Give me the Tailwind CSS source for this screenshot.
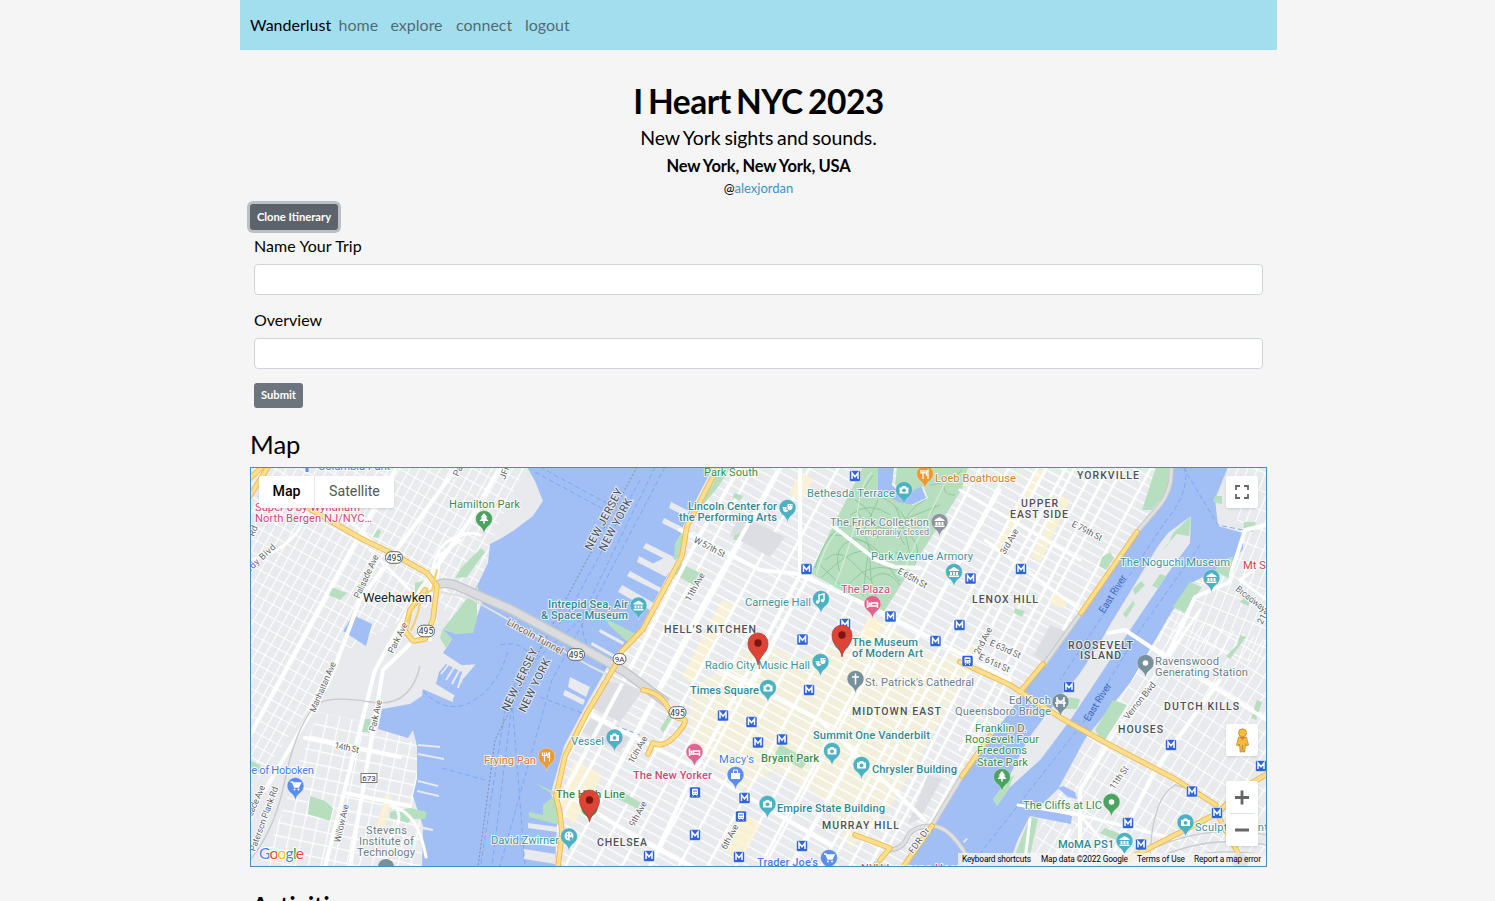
<!DOCTYPE html>
<html lang="en">
<head>
<meta charset="utf-8">
<title>Wanderlust</title>
<script src="https://cdn.jsdelivr.net/npm/@tailwindcss/browser@4"></script>
</head>
<body class="h-[901px] overflow-hidden bg-[#f5f5f5] font-['Lato',sans-serif] text-black">
<div class="ml-[240px] flex h-[901px] w-[1037px] flex-col overflow-hidden">
  <nav class="flex h-[50px] shrink-0 items-center bg-[#a3deee] px-[10px] text-[16px]">
    <a class="w-[88.5px]">Wanderlust</a>
    <a class="w-[52px] text-black/55">home</a>
    <a class="w-[65.5px] text-black/55">explore</a>
    <a class="w-[69px] text-black/55">connect</a>
    <a class="text-black/55">logout</a>
  </nav>
  <header class="flex h-[154px] shrink-0 flex-col items-center pt-[30px]">
    <h1 class="h-[41px] text-[33.5px] leading-[42px] font-bold tracking-[-0.5px] [word-spacing:-2.300px]">I Heart NYC 2023</h1>
    <p class="h-[33px] text-[19.500px] leading-[33px] tracking-[-0.1px] [word-spacing:-1px]">New York sights and sounds.</p>
    <p class="h-[24px] text-[16.500px] leading-[24px] font-bold tracking-[-0.15px] [word-spacing:-0.5px]">New York, New York, USA</p>
    <p class="h-[20px] text-[13px] leading-[20px]">@<a class="text-[#3c93c4]">alexjordan</a></p>
  </header>
  <div class="flex shrink-0 flex-col px-[10px]">
    <button class="h-[26px] w-[88px] rounded-[3px] bg-[#5c636a] text-[11.200px] font-bold text-white ring-3 ring-[#bcc0c4]">Clone Itinerary</button>
    <form class="flex flex-col px-1">
      <label class="mt-[3px] h-[31px] text-[16px] leading-[25px] tracking-[0.08px]">Name Your Trip</label>
      <input class="h-[31px] w-[1009px] rounded-[4px] border border-[#ced4da] bg-white">
      <label class="mt-[12px] h-[31px] text-[16px] leading-[25px]">Overview</label>
      <input class="h-[31px] w-[1009px] rounded-[4px] border border-[#ced4da] bg-white">
      <button class="mt-[14px] h-[25px] w-[49px] rounded-[3px] bg-[#6c757d] text-[11.200px] font-bold text-white">Submit</button>
    </form>
    <h2 class="mt-[19px] h-[40px] text-[25.600px] leading-[34px]">Map</h2>
  </div>
  <section class="relative ml-[10px] h-[400px] w-[1017px] shrink-0 overflow-hidden">
    <svg class="block h-[400px] w-[1017px] font-['Roboto',sans-serif]" viewBox="250 467 1017 400">
      <defs>
        <pattern id="city" width="25" height="8.6" patternUnits="userSpaceOnUse" patternTransform="translate(658 640) rotate(28.5)"><path d="M0 0H25" stroke="#fff" stroke-width="2.4"/><path d="M0 0V8.6" stroke="#fff" stroke-width="5"/></pattern>
        <pattern id="jersey" width="9" height="12" patternUnits="userSpaceOnUse" patternTransform="rotate(29)"><path d="M0 0H9M0 0V12" stroke="#fff" stroke-width="2.2"/></pattern>
        <pattern id="hob" width="12.5" height="13" patternUnits="userSpaceOnUse" patternTransform="translate(330 700) rotate(12)"><path d="M0 0H12.5M0 0V13" stroke="#fff" stroke-width="2.4"/></pattern>
        <pattern id="queens" width="10" height="16" patternUnits="userSpaceOnUse" patternTransform="rotate(32)"><path d="M0 0H10M0 0V16" stroke="#fff" stroke-width="2.2"/></pattern>
        <pattern id="ast" width="9" height="18" patternUnits="userSpaceOnUse" patternTransform="rotate(22)"><path d="M0 0H9M0 0V18" stroke="#fff" stroke-width="2"/></pattern>
        <path id="p" d="M0 14.5C-1.2 9.500-3 8.200-5.800 6A8.400 8.400 0 1 1 5.800 6C3 8.200 1.200 9.500 0 14.500Z" stroke="#fff" stroke-opacity=".5" stroke-width=".6"/>
        <g id="cam"><use href="#p" fill="#4db1c4"/><path d="M-4.500-2.500h2l1-1.500h3l1 1.500h2v6h-9z" fill="#fff"/><circle cy=".3" r="1.900" fill="#4db1c4"/></g>
        <g id="mus"><path d="M-5-2L0-5l5 3v1H-5zM-4 0h2v3h-2zM2 0h2v3H2zM-1 0h2v3h-2zM-5 3.500H5V5H-5z" fill="#fff"/></g>
        <g id="museum"><use href="#p" fill="#4db1c4"/><use href="#mus"/></g>
        <g id="masks"><use href="#p" fill="#4db1c4"/><path d="M0-4h5v4q-2 4-5 1zM-5-1h4v3h2q-2 4-5 1z" fill="#fff"/><path d="M1.500-2.500h.8M3.500-2.500h.8M-3.800.8h.8" stroke="#4db1c4"/></g>
        <g id="bed"><use href="#p" fill="#e0648f"/><path d="M-5-3.500V4M-5 2H5V4M5 2V-1H-1V1" stroke="#fff" stroke-width="1.500" fill="none"/><circle cx="-2.800" cy="-.3" r="1.300" fill="#fff"/></g>
        <g id="food"><use href="#p" fill="#ee9a34"/><path d="M-2 5V-4M-4-4v3h4v-3M3 5V-4q-2 1-1.500 5H3" stroke="#fff" stroke-width="1.200" fill="none"/></g>
        <g id="tree"><use href="#p" fill="#4aa35e"/><path d="M0-6l3.500 4.500h-1.700L4.500 2H.8v2.500H-.8V2h-3.700l2.700-3.500h-1.700z" fill="#fff"/></g>
        <g id="cart"><use href="#p" fill="#5b8def"/><path d="M-5-4h2l2 5h4l2-4h-7" stroke="#fff" stroke-width="1.500" fill="none"/><path d="M-2-3h6L3 1h-4z" fill="#fff"/><circle cx="-1" cy="3.500" r="1" fill="#fff"/><circle cx="3" cy="3.500" r="1" fill="#fff"/></g>
        <g id="m"><rect x="-5.500" y="-5.500" width="11" height="11" rx="1.500" fill="#2f63d8" stroke="#fff" stroke-width=".5"/><path d="M-3 3V-3L0 .8 3-3V3" stroke="#fff" stroke-width="1.500" fill="none"/></g>
        <g id="t"><rect x="-5.500" y="-5.500" width="11" height="11" rx="1.500" fill="#2f63d8" stroke="#fff" stroke-width=".5"/><rect x="-3" y="-3.800" width="6" height="6.400" rx="1" fill="#fff"/><path d="M-2-1.500h4M-1.500 1h.8M.8 1h.8" stroke="#2f63d8" stroke-width="1.200"/><path d="M-2.500 4l1-1M2.500 4l-1-1" stroke="#fff"/></g>
        <g id="red"><path d="M0 22C-.8 17-3 14-6 10.500C-8.800 7.500-10 4.500-10 0A10 10 0 0 1 10 0C10 4.500 8.800 7.500 6 10.500C3 14 .8 17 0 22Z" fill="#db4437" stroke="#b5352a" stroke-width=".7"/><circle r="3.700" fill="#7a150f"/></g>
        <g id="s495"><rect x="-8.500" y="-5.800" width="17" height="11.600" rx="5.500" fill="#fff" stroke="#666" stroke-width="1"/><text y="3" text-anchor="middle" font-size="8.500" fill="#333">495</text></g>
      </defs>
      <rect x="250" y="467" width="1017" height="400" fill="#e8eaed"/>
      <path fill="url(#jersey)" d="M250 467H525L490 545 475 630 400 640 330 680 250 790Z"/>
      <path fill="#e8eaed" d="M365 640L440 600 470 665 422 700 382 705 375 720 320 708 330 660Z"/>
      <path fill="url(#hob)" d="M318 712L380 725 418 745 417 800 425 867H262L290 790Z"/>
      <path fill="url(#city)" d="M718 467H1173L1168 495 1081 613 1010 713 907 867H553V793L567 746 610 663 682 556Z"/>
      <path fill="url(#queens)" d="M1170 613L1266 640V867H1020L1085 739Z"/>
      <path fill="url(#ast)" d="M1228 467H1267V665L1150 640 1191 583 1243 549Z"/>
      <g fill="#fdf3cf" fill-opacity=".8">
        <path d="M690 690L760 640 800 660 885 620 940 660 985 640 950 705 895 800 850 850 825 800 775 770 740 790 690 740Z" opacity=".65"/>
        <path d="M1035 470h12l-25 48-20 36-9-4 22-39zM1060 495l10 5-30 62-9-5zM870 615l14 8-17 30-14-7zM575 760l28 15-30 50-13-22zM800 472l14 7-12 22-13-7zM385 795l7 2-8 34-8-2zM350 480l8 5-15 38-8-5zM722 600l12 5-42 78-10-6zM1055 593l13 7-5 9-14-6zM740 815l20 9-18 35-20-10z"/>
      </g>
      <g fill="url(#city)"><path d="M690 690L760 640 800 660 885 620 940 660 985 640 950 705 895 800 850 850 825 800 775 770 740 790 690 740Z"/><path d="M1030 467h45l-40 100-45-10zM720 590h30l-50 100h-25z"/></g>
      <g fill="#dcdee3"><path d="M605 680L643 690 620 722 592 708zM590 718l40 20-10 14-38-20zM928 775l14 4-22 40-12 5zM740 515l45 22-15 20-40-22zM1050 625l28 12-32 28-12-10z"/></g>

      <g fill="#a1bef5">
        <path d="M527 467L535 481 543 501 533 516 513 531 500 539 490 544 488 563 477 586 482 602 473 629 457 634 442 629 452 639 443 653 463 666 463 679 452 701 423 688 422 696 410 704 382 709 378 729 408 738 413 730 417 746 417 779 413 796 423 826 422 867H555L557 819 551 793 564 746 587 703 604 673 610 660 627 643 640 629 676 559 683 526 698 496 713 467Z"/>
        <path d="M1173 467L1168 493 1141 529 1081 613 1038 672 1008 714 960 780 932 826 907 867H1008L1018 839 1030 816 1071 824 1072 816 1038 808 1058 789 1085 739 1130 683 1171 613 1191 583 1231 563 1243 549 1243 533 1218 526 1215 499 1228 467Z"/>
        <path d="M1058 788l5-2 12 6 2 7-9-2zM353 615L372 624 366 646 343 631ZM878 468h16l-2 17 9 10 20-9 5 12-15 7-15-3-20-12zM940 496q8-6 5 6t-8 5q-3-4 3-11z"/>
      </g>
      <path fill="#e8eaed" d="M1191 516L1190 543 1168 573 1155 593 1128 633 1108 663 1071 719 1041 759 1008 789 997 806 993 799 1007 781 1028 739 1058 699 1078 676 1098 646 1111 623 1138 579 1158 546 1168 533Z"/>
      <g fill="#e8eaed">
        <path d="M671 502l18 9-2 6-18-9zM664 518l20 10-2 5-20-10zM646 543l28 14-3 5-28-14zM639 556l30 16-3 5-29-15zM630 571l31 17-2 4-32-16zM622 585l32 18-4 7-32-18zM600 629l24 13-1 3-24-13zM592 642l32 18-1 3-32-18zM570 677l20 10-4 10-18-10zM565 690l20 10-2 5-20-10zM528 823l29 4v5l-29-4zM525 837l32 5v5l-32-4zM524 849l31 5v10l-31-5zM418 744l22 2v2l-22-2zM418 753l26 5v2l-26-5zM418 780l20 5v2l-20-5zM417 790l22 5v2l-22-5zM421 826l12 3v2l-12-2zM966 838l2 1-4 4-1-1z"/>
        <path d="M463 665l40-2-5 15-12 25-45-22zM650 565l20-10 8 8-8 10z"/>
      </g>
      <path fill="#a1bef5" d="M476 664l40-8-12 55-50-10 9-22zM439 672l7-8 16 8-3 26-23-14z"/>
      <path d="M423 688l30 13M441 674l8-10M446 680l9-14M452 684l8-15M458 688l4-13" stroke="#e8eaed" stroke-width="2"/>
      <g fill="#b7dfbf">
        <path id="park" d="M863 467L833 526 810 573 870 606 883 613 913 566 962 489 968 467ZM878 468l0 22 20 12 15 3 15-7-5-12-20 9-8-10 2-17z" fill-rule="evenodd"/>
        <path d="M443 629l33-42 1-2 0 34-4 14-16 1zM455 578l6-10 20-20 4 4-18 25zM442 630l10 8-6 10-6-10zM415 583l15-4-15 20zM373 537l5-8 3 2-3 7zM340 600l-12-5 3-8 16 6zM310 796l15 5 8 7-3 13-22-7zM390 812l20-4 17 4-2 7-14 0-3 4-18-5zM250 760l10 5 2 8-12-4zM365 719h6l-2 13h-7zM680 563l20 10-5 13-21-12zM606 619l32 16-7 10-22-20zM675 543l8-12 1 25-10 4zM721 467l10 0-13 20-18 22-3-3 14-19zM780 744l28 16-6 9-27-15zM543 805l12-10 5 30-31-8v-5l14 3zM621 791l20 12-3 6-20-10zM535 783l20 9v4zM1142 510l14-43 13 0-1 23-16 20zM1102 557l8-5 4 6-8 12-7-4zM1173 607l17-25 12 5-17 26zM1168 545l5-12 18-17-2 20-12-2-15 16zM1133 589l8-8 4 4-10 10zM1123 614l10-13 2 3-9 14zM1152 586l8-12 6 2-8 12zM1220 562l13-6-3 23-15-8zM1240 602l8-8 4 3-4 9zM1095 730l18-30 14 5-24 38zM1068 697l12 2-3 10-11 0zM1010 867l20-50 8 2-5 22-5 26zM1215 496l7 0 0 8-9-2zM1244 522l12 0-3 10-10-2zM1237 645l3-10 6 2-16 22-4-3zM1251 718l6-18 5 2-6 18zM1105 828l15 6-4 6-16-7zM872 860l16 6h-18z"/>
        <path d="M1007 781l-14 18 4 7 11-15 6-16z"/>
        <path d="M735 535l8-3-2 8-8 0zM680 705l-12 20-5 8-3-4 12-20zM1015 608l10 3-3 6-8-4zM735 493l8 3-3 5-8-4z"/>
      </g>
      <g fill="none" stroke="#86c193" stroke-width=".8">
        <path d="M815 568q15-45 35-42t20 35 12 45M822 577q30-30 45-25t35 0M830 535q40 0 55 25t15 20M845 590q20-30 50-20M873 475q-15 20-15 35t35 20 20 40M866 490q30 10 40 30t30-15M895 506q10 20 15 50M925 500q-20 10-25 35M850 515q20-15 40 0M825 560q12-12 25 0t20 20q15-15 30 5M930 485q20-2 32-15M855 500q20 10 23 38M905 545q-15-20 10-30t25-10M840 573q-8-25 10-32t30 24M945 480q-5 15 10 15M820 565l30 29M868 552l-5 44M878 500l-15 32"/>
      </g>
      <g fill="none" stroke="#d3ebd6" stroke-width="1.400"><path d="M816 575q12-40 25-46M857 520q2-35 15-48M905 568q15-35 40-85M835 585q12-30 20-60"/></g>

      <g fill="none" stroke="#7ba4f3" stroke-width=".9" stroke-dasharray="5 3">
        <path d="M655 467L580 620 530 665 505 710 480 870M665 467L590 610 552 680 500 866M640 480L570 610 515 680 492 866M535 472L605 510M540 467L610 505M423 691q25 25 50 10t35-50M442 768L485 780M583 615q-5 30 25 55M500 645q20-5 30 10M1183 467L1218 525 1243 530M1185 467q5 25-20 55L1060 680M1200 545L1140 630 1085 720 975 860M540 697L640 735M512 700L525 867"/>
      </g>
      <g fill="none" stroke="#7c8698" stroke-width=".9" stroke-dasharray="2 2"><path d="M637 467L560 610 525 680 495 740 478 867"/></g>

      <g fill="none" stroke="#fff" stroke-linecap="round" stroke-linejoin="round">
        <g stroke-width="4"><path d="M800 467V575L870 606 1010 680M833 526L876 560 895 567 920 568M800 575L690 780 650 866M250 735L310 625 395 470M265 790L330 680 360 600 455 470M325 867L375 670 420 590 470 520 500 467M350 867L383 670 435 620M305 738L400 757M345 793L410 806M590 715L710 775 830 845M560 790L640 840 690 866M700 535L640 650 560 800M780 467L700 610 590 820M740 467L700 535M1266 525L1245 530 1232 570 1230 582 1195 597 1165 660M1108 633L1125 630 1170 660 1267 720M1220 680L1155 770 1115 850M1108 744L1080 790 1080 866M720 670L820 720 925 820M680 530L760 570 810 575"/></g>
        <g stroke-width="3"><path d="M1075 467L1010 590 870 866M1047 467L900 740 830 866M895 615L760 866M810 573L755 680M1108 470L960 750M1000 490L790 866M960 490L1080 560M985 540L1080 610M600 750L560 820M250 560q25-5 40-20t10-20L330 480M350 520L380 550M410 590L370 550M430 640L440 555 460 540M430 600q0-50 20-60T480 535M1018 805L1080 815 1110 850M1110 740L1200 610M1267 560L1240 580 1267 600M1030 819L1025 860M1070 830L1050 866M1068 812L1180 840M390 840q20-30-5-40M393 807q25 5 33 50"/></g>
      </g>
      <g fill="none" stroke="#c9cbd0" stroke-width="1.400"><path d="M250 860Q275 830 285 780T315 705Q330 695 370 702T420 666M1150 866Q1150 800 1175 785L1195 790M1120 867Q1190 820 1267 835M1140 867Q1200 832 1267 845M1160 867Q1200 845 1267 855"/></g>
      <g fill="none" stroke-linejoin="round">
        <g stroke="#c5c7cb" stroke-width="10"><path d="M437 586q4-5 18-1L510 609 590 652 625 672 667 703"/></g>
        <g stroke="#dadcdf" stroke-width="7"><path d="M437 586q4-5 18-1L510 609 590 652 625 672 667 703"/></g>
        <path d="M440 592l30 6 120 68 50 25" stroke="#e0e2e6" stroke-width="2"/>
        <path d="M1171 467Q1173 488 1160 505L1137 532M1081 613L1043 666M962 776L932 826M887 850q15 0 20-12t25-12 40 40" stroke="#c5c7cb" stroke-width="5"/>
        <path d="M1171 467Q1173 488 1160 505L1137 532M1081 613L1043 666M962 776L932 826M887 850q15 0 20-12t25-12 40 40" stroke="#dfe0e2" stroke-width="3"/>
      </g>
      <g id="hw" fill="none" stroke-linejoin="round" stroke-linecap="round">
        <path stroke="#f0b84c" stroke-width="5.600" d="M558 867L562 833 560 813 556 796 565 756 587 713 615 666 622 651 643 629 682 556 687 526 703 496 718 467M290 500L310 509 360 538 393 554 427 573 437 586 433 619 425 639 413 641 405 631 410 610 425 590M250 496L268 467M250 478L262 467M643 690Q660 693 667 706T682 719 677 734 653 743L648 754M960 662L1010 685 1061 718 1108 744 1175 779 1216 805M1100 867L1128 859 1218 813 1240 790 1267 774M1137 532L1081 613M1043 664L1020 692M990 736L962 776M932 826L903 867M1215 810L1245 866M855 835L890 848 880 860"/>
        <path stroke="#fbdf8e" stroke-width="3.800" d="M558 867L562 833 560 813 556 796 565 756 587 713 615 666 622 651 643 629 682 556 687 526 703 496 718 467M290 500L310 509 360 538 393 554 427 573 437 586 433 619 425 639 413 641 405 631 410 610 425 590M250 496L268 467M250 478L262 467M643 690Q660 693 667 706T682 719 677 734 653 743L648 754M960 662L1010 685 1061 718 1108 744 1175 779 1216 805M1100 867L1128 859 1218 813 1240 790 1267 774M1137 532L1081 613M1043 664L1020 692M990 736L962 776M932 826L903 867M1215 810L1245 866M855 835L890 848 880 860"/>
        <path stroke="#f5cf70" stroke-width="2" d="M405 631Q412 600 432 590L437 570M411 630Q420 612 420 600"/>
      </g>

      <g font-size="9" fill="#5f6368" class="stroke-white stroke-2 [paint-order:stroke]">
        <text transform="translate(693 542) rotate(27)" textLength="34">W 57th St</text>
        <text transform="translate(690 602) rotate(-61)" textLength="31">11th Ave</text>
        <text transform="translate(897 573) rotate(29)" textLength="32">E 65th St</text>
        <text transform="translate(1071 526) rotate(27)" textLength="33">E 79th St</text>
        <text transform="translate(1005 555) rotate(-60)" textLength="28">3rd Ave</text>
        <text transform="translate(979 655) rotate(-62)" textLength="29">2nd Ave</text>
        <text transform="translate(989 645) rotate(24)" textLength="33">E 63rd St</text>
        <text transform="translate(978 659) rotate(24)" textLength="33">E 61st St</text>
        <text transform="translate(359 599) rotate(-65)" textLength="47">Palisade Ave</text>
        <text transform="translate(393 654) rotate(-63)" textLength="33">Park Ave</text>
        <text transform="translate(315 713) rotate(-67)" textLength="54">Manhattan Ave</text>
        <text transform="translate(375 732) rotate(-77)" textLength="32">Park Ave</text>
        <text transform="translate(334 748) rotate(12)" textLength="25">14th St</text>
        <text transform="translate(340 843) rotate(-77)" textLength="39">Willow Ave</text>
        <text transform="translate(247 828) rotate(-66)" textLength="45">Palisade Ave</text>
        <text transform="translate(255 852) rotate(-70)" textLength="68">Paterson Plank Rd</text>
        <text transform="translate(233 588) rotate(-43)" textLength="59">Kennedy Blvd</text>
        <text transform="translate(254 537) rotate(-68)">Rd</text>
        <text transform="translate(458 477) rotate(-62)">Park Ave</text>
        <text transform="translate(505 480) rotate(-70)">JFK Blvd</text>
        <text transform="translate(633 764) rotate(-60)" textLength="30">10th Ave</text>
        <text transform="translate(634 827) rotate(-61)" textLength="27">9th Ave</text>
        <text transform="translate(726 850) rotate(-62)" textLength="27">6th Ave</text>
        <text transform="translate(1128 720) rotate(-51)" textLength="45">Vernon Blvd</text>
        <text transform="translate(1114 790) rotate(-55)" textLength="26">11th St</text>
        <text transform="translate(1235 590) rotate(38)" textLength="36">Broadway</text>
        <text transform="translate(1262 625) rotate(-60)">21st</text>
        <text transform="translate(913 854) rotate(-54)" textLength="29">FDR Dr</text>
      </g>
      <g font-size="11" fill="#4a4d52" class="stroke-white/70 stroke-2 [paint-order:stroke]">
        <text transform="translate(591 551) rotate(-62)" textLength="68">NEW JERSEY</text>
        <text transform="translate(605 552) rotate(-62)" textLength="58">NEW YORK</text>
        <text transform="translate(508 712) rotate(-64)" textLength="68">NEW JERSEY</text>
        <text transform="translate(525 713) rotate(-64)" textLength="58">NEW YORK</text>
        <text transform="translate(506 624) rotate(29)" font-size="9.800" fill="#7a5b45" textLength="63">Lincoln Tunnel</text>
      </g>
      <g font-size="10" fill="#3c68bd"><text transform="translate(1104 614) rotate(-58)" textLength="43">East River</text><text transform="translate(1089 722) rotate(-58)" textLength="43">East River</text></g>

      <use href="#s495" x="394" y="557.500"/><use href="#s495" x="426" y="631"/><use href="#s495" x="576" y="654.500"/><use href="#s495" x="677.500" y="712.500"/>
      <rect x="613" y="653.500" width="13" height="11" rx="5.500" fill="#fff" stroke="#666"/><text x="619.500" y="662" font-size="8" text-anchor="middle" fill="#333">9A</text>
      <rect x="361" y="773.500" width="16" height="9" fill="#fff" stroke="#777"/><text x="369" y="781" font-size="8" text-anchor="middle" fill="#333">673</text>

      <use href="#m" x="855" y="476"/><use href="#m" x="806.500" y="569"/><use href="#m" x="970.500" y="578.500"/><use href="#m" x="1021" y="569"/><use href="#m" x="890.500" y="616.500"/><use href="#m" x="959.500" y="625"/><use href="#m" x="845" y="624"/><use href="#m" x="802.500" y="639.500"/><use href="#m" x="935.500" y="641"/><use href="#t" x="967.500" y="661"/><use href="#m" x="809" y="690"/><use href="#m" x="723" y="715.500"/><use href="#m" x="751.500" y="722"/><use href="#m" x="758" y="742.500"/><use href="#m" x="782" y="739.500"/><use href="#t" x="695" y="792.500"/><use href="#m" x="744.500" y="798"/><use href="#t" x="741" y="816.500"/><use href="#m" x="695" y="835"/><use href="#m" x="649" y="856"/><use href="#m" x="739" y="857"/><use href="#m" x="802" y="846"/><use href="#m" x="1069" y="687"/><use href="#m" x="1171" y="745"/><use href="#m" x="1261" y="766"/><use href="#m" x="1192" y="791.500"/><use href="#m" x="1217" y="813"/><use href="#m" x="1128" y="823"/><use href="#m" x="1141" y="844.500"/>

      <use href="#tree" x="484" y="519"/><use href="#tree" x="1002" y="777"/>
      <use href="#p" x="1111.500" y="802" fill="#4aa35e"/><circle cx="1111.500" cy="802" r="2.800" fill="#fff"/>
      <use href="#masks" x="787.500" y="508"/><use href="#masks" x="820.500" y="662"/>
      <use href="#cam" x="904" y="490"/><use href="#cam" x="768" y="688"/><use href="#cam" x="614.500" y="737.500"/><use href="#cam" x="832" y="751"/><use href="#cam" x="861.500" y="765"/><use href="#cam" x="767.500" y="804"/><use href="#cam" x="1185.500" y="822.500"/>
      <use href="#museum" x="638.500" y="605.500"/><use href="#museum" x="954" y="572"/><use href="#museum" x="1211.500" y="578"/><use href="#museum" x="1124.500" y="841"/><use href="#museum" x="842" y="642"/>
      <use href="#p" x="939.500" y="522" fill="#8d949b"/><use href="#mus" x="939.500" y="522"/>
      <use href="#p" x="821" y="599" fill="#4db1c4"/><path d="M819 602v-7l5-1v6" stroke="#fff" stroke-width="1.500" fill="none"/><circle cx="817.500" cy="602" r="1.800" fill="#fff"/><circle cx="822.600" cy="600.500" r="1.800" fill="#fff"/>
      <use href="#bed" x="872.500" y="604"/><use href="#bed" x="694.500" y="752"/>
      <use href="#food" x="925" y="474"/><use href="#food" x="546.500" y="756.500"/>
      <use href="#cart" x="295.500" y="786"/><use href="#cart" x="829" y="858"/>
      <use href="#p" x="735.500" y="775" fill="#5b8def"/><path d="M731 773h9v6h-9z" fill="#fff"/><path d="M733.500 773v-3h4v3" stroke="#fff" fill="none"/>
      <use href="#p" x="855.500" y="679" fill="#78909c"/><path d="M855.500 673.500v11M852 677h7" stroke="#fff" stroke-width="1.500"/>
      <use href="#p" x="1060.500" y="702" fill="#78909c"/><path d="M1057 697v10M1064 697v10M1055 703h11M1057 699q3.500 5 7 0" stroke="#fff" stroke-width="1.500" fill="none"/>
      <use href="#p" x="1145.500" y="663" fill="#78909c"/><circle cx="1145.500" cy="663" r="2.800" fill="#fff"/>
      <use href="#p" x="569" y="836.500" fill="#4db1c4"/><circle cx="569" cy="836" r="4.500" fill="#fff"/><path d="M567 834h1M570 834h1M567 837h1" stroke="#4db1c4" stroke-width="1.500"/><circle cx="571" cy="838.500" r="1.500" fill="#4db1c4"/>
      <circle cx="386" cy="867" r="8" fill="#78909c"/><circle cx="1240" cy="861" r="8" fill="#78909c"/>
      <use href="#p" x="589.500" y="808" fill="#3f9352"/>
      <path d="M307 467v5" stroke="#5b8def" stroke-width="3"/>

      <g font-size="11.200" class="stroke-white/80 stroke-2 [paint-order:stroke] [stroke-linejoin:round]">
        <g fill="#2d8a94" font-weight="500">
          <text x="688" y="510" textLength="89">Lincoln Center for</text><text x="679" y="521" textLength="98">the Performing Arts</text>
          <text x="548" y="608" textLength="80">Intrepid Sea, Air</text><text x="541" y="619" textLength="87">&amp; Space Museum</text>
          <text x="852" y="646" textLength="66">The Museum</text><text x="852" y="657" textLength="71">of Modern Art</text>
          <text x="690" y="694" textLength="69">Times Square</text><text x="813" y="739" textLength="117">Summit One Vanderbilt</text><text x="872" y="773" textLength="85">Chrysler Building</text><text x="777" y="812" textLength="108">Empire State Building</text><text x="1058" y="848" textLength="56">MoMA PS1</text>
        </g>
        <g fill="#3d959f">
          <text x="807" y="497" textLength="88">Bethesda Terrace</text><text x="871" y="560" textLength="102">Park Avenue Armory</text><text x="745" y="606" textLength="66">Carnegie Hall</text><text x="705" y="669" textLength="105">Radio City Music Hall</text><text x="571" y="745" textLength="33">Vessel</text><text x="491" y="844" textLength="68">David Zwirner</text><text x="1120" y="566" textLength="110">The Noguchi Museum</text><text x="1195" y="831" textLength="83">SculptureCenter</text>
        </g>
        <g fill="#3d8c4c">
          <text x="704" y="476" textLength="54">Park South</text><text x="449" y="508" textLength="71">Hamilton Park</text><text x="761" y="762" textLength="58" font-weight="500">Bryant Park</text><text x="556" y="798" textLength="69" font-weight="500">The High Line</text><text x="1023" y="809" textLength="79">The Cliffs at LIC</text>
          <text x="975" y="732" textLength="52">Franklin D.</text><text x="965" y="743" textLength="74">Roosevelt Four</text><text x="977" y="754" textLength="50">Freedoms</text><text x="977" y="766" textLength="51">State Park</text>
        </g>
        <g fill="#78828a">
          <text x="830" y="526" textLength="99">The Frick Collection</text><text x="855" y="535" font-size="9" textLength="74">Temporarily closed</text>
        </g>
        <g fill="#6b7f8a">
          <text x="865" y="686" textLength="109">St. Patrick's Cathedral</text><text x="1009" y="704" textLength="42">Ed Koch</text><text x="955" y="715" textLength="96">Queensboro Bridge</text><text x="1155" y="665" textLength="64">Ravenswood</text><text x="1155" y="676" textLength="93">Generating Station</text><text x="366" y="834" textLength="41">Stevens</text><text x="359" y="845" textLength="55">Institute of</text><text x="357" y="856" textLength="58">Technology</text>
        </g>
        <g fill="#db447a">
          <text x="841" y="593" textLength="49">The Plaza</text><text x="633" y="779" textLength="79" font-weight="500">The New Yorker</text><text x="255" y="511" textLength="105">Super 8 by Wyndham</text><text x="255" y="522" textLength="117">North Bergen NJ/NYC…</text>
        </g>
        <g fill="#d47c28"><text x="935" y="482" textLength="81">Loeb Boathouse</text><text x="484" y="764" textLength="52">Frying Pan</text></g>
        <g fill="#4a7ce8"><text x="719" y="763" textLength="35">Macy's</text><text x="757" y="866" font-weight="500" textLength="61">Trader Joe's</text><text x="221" y="774" textLength="93">Shoppe of Hoboken</text><text x="318" y="470" textLength="72">Columbia Park</text></g>
        <text x="1243" y="569" fill="#d2444a">Mt Sinai</text><text x="861" y="872" fill="#d2444a" textLength="118">NYU Langone Hospital</text>
      </g>
      <g font-size="10.500" fill="#4d5156" font-weight="500" class="stroke-white/70 stroke-2 [paint-order:stroke]">
        <text x="664" y="633" textLength="92">HELL'S KITCHEN</text><text x="1077" y="479" textLength="62">YORKVILLE</text><text x="1021" y="507" textLength="37">UPPER</text><text x="1010" y="518" textLength="58">EAST SIDE</text><text x="972" y="603" textLength="66">LENOX HILL</text><text x="1068" y="649" textLength="65">ROOSEVELT</text><text x="1080" y="659" textLength="41">ISLAND</text><text x="852" y="715" textLength="89">MIDTOWN EAST</text><text x="822" y="829" textLength="77">MURRAY HILL</text><text x="597" y="846" textLength="50">CHELSEA</text><text x="1164" y="710" textLength="75">DUTCH KILLS</text><text x="1118" y="733" textLength="45">HOUSES</text>
        <text x="363" y="602" font-size="13" font-weight="400" fill="#222" textLength="69">Weehawken</text>
      </g>
      <use href="#red" x="758" y="643"/><use href="#red" x="842" y="635"/><use href="#red" x="589.500" y="800"/>
      <text x="259" y="859" font-size="15.500" font-family="Lato" textLength="45" stroke-linejoin="round" class="stroke-white stroke-2 [paint-order:stroke]"><tspan fill="#4285f4">G</tspan><tspan fill="#ea4335">o</tspan><tspan fill="#fbbc05">o</tspan><tspan fill="#4285f4">g</tspan><tspan fill="#34a853">l</tspan><tspan fill="#ea4335">e</tspan></text>
      <rect x="958" y="853" width="309" height="13" fill="#f5f5f5" fill-opacity=".8"/>
      <g font-size="8.300" fill="#000"><text x="962" y="862" textLength="69">Keyboard shortcuts</text><text x="1041" y="862" textLength="87">Map data ©2022 Google</text><text x="1137" y="862" textLength="48">Terms of Use</text><text x="1194" y="862" textLength="67">Report a map error</text></g>
      <rect x="250.500" y="467.500" width="1016" height="399" fill="none" stroke="#3c93bd"/>
    </svg>
    <div class="absolute top-[9px] left-[9px] flex h-[32px] w-[135px] items-center rounded-[2px] bg-white font-['Roboto',sans-serif] text-[14.200px] shadow-sm">
      <span class="flex h-full w-[56px] items-center justify-center border-r border-[#e6e6e6] font-medium">Map</span>
      <span class="flex-1 text-center text-[#565656]">Satellite</span>
    </div>
    <div class="absolute top-[9px] right-[9px] flex size-[32px] items-center justify-center rounded-[2px] bg-white shadow-sm">
      <svg class="size-[14px]" viewBox="0 0 14 14" fill="none" stroke="#666" stroke-width="1.800"><path d="M1 5V1h4M9 1h4v4M13 9v4H9M5 13H1V9"/></svg>
    </div>
    <div class="absolute top-[257px] right-[9px] flex size-[32px] items-center justify-center rounded-[2px] bg-white shadow-sm">
      <svg class="h-[25px] w-[15px]" viewBox="0 0 15 25"><path d="M3.500 9h8l2 8-2 .8-1-2-.7 8.200h-1.800l-.5-7-.5 7H5.200L4.500 16l-1 2-2-.8z" fill="#f5bd3a" stroke="#b97c28" stroke-width=".7"/><circle cx="7.500" cy="4.800" r="4" fill="#f5bd3a" stroke="#b97c28" stroke-width=".7"/><path d="M4.500 9h6l-3 3z" fill="#e5713c"/></svg>
    </div>
    <div class="absolute top-[314px] right-[9px] flex h-[65px] w-[32px] flex-col items-center rounded-[2px] bg-white shadow-sm">
      <svg class="h-[65px] w-[32px]" viewBox="0 0 32 65"><path d="M9 16.500h14M16 9.500v14M9 49h14" stroke="#666" stroke-width="2.800"/><path d="M4 32.500h24" stroke="#e1e1e1"/></svg>
    </div>
  </section>
  <h2 class="mt-[22px] ml-[12px] h-[34px] shrink-0 text-[24px] leading-[34px] font-bold">Activities</h2>
</div>
</body>
</html>
